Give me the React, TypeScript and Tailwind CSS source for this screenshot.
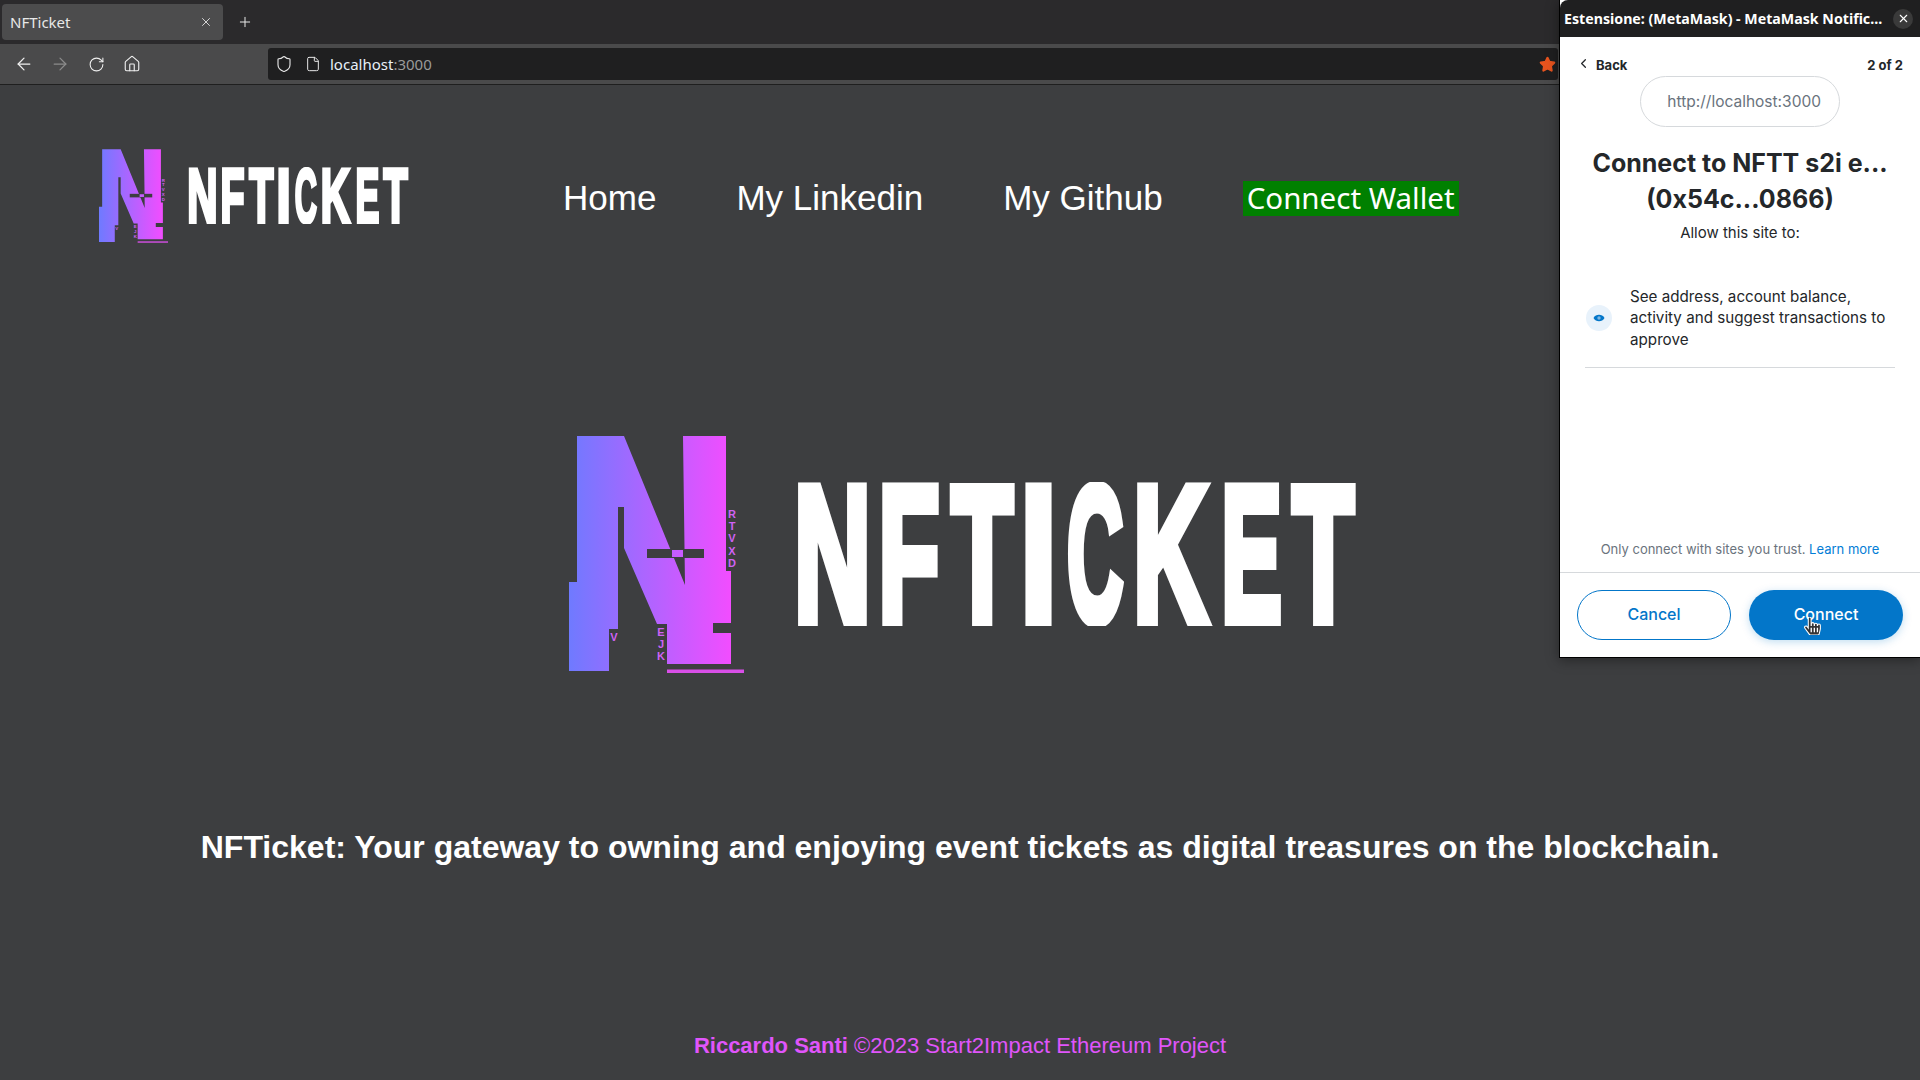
import { ArrowLeft, ArrowRight, RotateCw, Home, Shield, File, Star, X, Plus, ChevronLeft } from "lucide-react";
import { FaHandPointer } from "react-icons/fa";

function Mark({ id, className }: { id: string; className: string }) {
  return (
    <svg viewBox="0 0 175 237" className={className}>
      <defs>
        <linearGradient id={id} gradientUnits="userSpaceOnUse" x1="0" y1="0" x2="162" y2="0">
          <stop offset="0" stopColor="#6f7aff" />
          <stop offset="1" stopColor="#f24dff" />
        </linearGradient>
      </defs>
      <polygon
        fill={`url(#${id})`}
        points="7,0 55,0 116,149 114,0 157,0 157,135 162,135 162,187 144,187 144,197 162,197 162,228 98,228 98,188 88,188 55,112 55,71 49,71 49,193 40,193 40,235 0,235 0,146 8,146 8,0"
      />
      <rect x="78" y="113" width="57" height="9" fill="#3d3e40" />
      <rect x="103" y="114" width="11" height="7" fill={`url(#${id})`} />
      <rect x="98" y="233.5" width="77" height="3.5" fill="#d94fe8" />
      <g fill="#cf62f5" fontFamily="'Liberation Sans', sans-serif" fontWeight="700" fontSize="11" textAnchor="middle">
        <text x="163" y="82">R</text>
        <text x="163" y="94">T</text>
        <text x="163" y="106">V</text>
        <text x="163" y="119">X</text>
        <text x="163" y="131">D</text>
        <text x="92" y="200">E</text>
        <text x="92" y="212">J</text>
        <text x="92" y="224">K</text>
        <text x="45" y="205">V</text>
      </g>
    </svg>
  );
}

const STROKE = 11;
const GLYPHS = [
  { c: "N", left: 0, right: 73, lsb: 0.097, ink: 0.806 },
  { c: "F", left: 84, right: 145, lsb: 0.115, ink: 0.82 },
  { c: "T", left: 152, right: 220, lsb: 0.033, ink: 0.93 },
  { c: "I", left: 228, right: 257, lsb: 0.25, ink: 0.5 },
  { c: "C", left: 269, right: 329, lsb: 0.062, ink: 0.87 },
  { c: "K", left: 339, right: 417, lsb: 0.097, ink: 0.9 },
  { c: "E", left: 426, right: 487, lsb: 0.105, ink: 0.825 },
  { c: "T", left: 493, right: 561, lsb: 0.033, ink: 0.93 },
];

function Wordmark({ className }: { className: string }) {
  const fs = (144 - STROKE) / 0.688;
  return (
    <svg viewBox="0 0 561 144" className={className}>
      <text
        y={144 - STROKE / 2}
        fontFamily="'Liberation Sans', sans-serif"
        fontWeight="700"
        fontSize={fs}
        fill="#ffffff"
        stroke="#ffffff"
        strokeWidth={STROKE}
        strokeLinejoin="miter"
      >
        {GLYPHS.map((g, i) => {
          const adv = (g.right - g.left - STROKE) / g.ink;
          return (
            <tspan key={i} x={g.left + STROKE / 2 - g.lsb * adv} textLength={adv} lengthAdjust="spacingAndGlyphs">
              {g.c}
            </tspan>
          );
        })}
      </text>
    </svg>
  );
}

export default function App() {
  return (
    <div className="relative h-[1080px] w-[1920px] overflow-hidden bg-[#3d3e40] font-['Liberation_Sans',sans-serif]">
      {/* Tab strip */}
      <div className="flex h-[44px] items-start bg-[#2b2a2c] pl-[2px] pt-[4px] font-['Noto_Sans',sans-serif] text-[#e8e8e8]">
        <div className="flex h-[36px] w-[221px] items-center justify-between rounded-[4px] bg-[#4c4c4d] pl-[8px] pr-[10px] text-[15px]">
          <span>NFTicket</span>
          <X size={14} strokeWidth={1.5} />
        </div>
        <div className="ml-[14px] flex h-[36px] items-center">
          <Plus size={16} strokeWidth={1.5} />
        </div>
      </div>
      {/* Toolbar */}
      <div className="flex h-[41px] items-center border-b border-[#1f1f1f] bg-[#4a4a4b] pl-[14px] font-['Noto_Sans',sans-serif]">
        <ArrowLeft size={20} strokeWidth={1.5} className="text-[#f0f0f0]" />
        <ArrowRight size={20} strokeWidth={1.5} className="ml-[16px] text-[#8c8c8c]" />
        <RotateCw size={17} strokeWidth={1.5} className="ml-[18px] text-[#f0f0f0]" />
        <Home size={18} strokeWidth={1.5} className="ml-[18px] text-[#f0f0f0]" />
        <div className="ml-[127px] flex h-[32px] w-[1290px] items-center rounded-[3px] bg-[#1f1f20] pl-[7px]">
          <Shield size={18} strokeWidth={1.5} className="text-[#e8e8e8]" />
          <File size={16} strokeWidth={1.5} className="ml-[12px] text-[#e8e8e8]" />
          <span className="ml-[9px] text-[15px] text-[#e8f0f8]">
            localhost<span className="text-[#9a9a9a]">:3000</span>
          </span>
          <Star size={17} className="ml-auto mr-[2px] fill-[#e8541f] text-[#e8541f]" />
        </div>
      </div>
      {/* Page */}
      <div className="flex h-[995px] flex-col">
        <nav className="flex h-[200px] items-center pl-[99px] pt-[22px]">
          <div className="flex items-end">
            <Mark id="markSmall" className="h-[94px] w-[69px]" />
            <Wordmark className="mb-[19px] ml-[20px] h-[57px] w-[221px]" />
          </div>
          <div className="ml-[154px] mt-[4px] flex items-center gap-[80px] text-[35px] text-white">
            <span>Home</span>
            <span>My Linkedin</span>
            <span>My Github</span>
            <span className="bg-[#008000] px-[4px] pb-[2px] font-['Noto_Sans',sans-serif] text-[29.5px] leading-[33px]">Connect Wallet</span>
          </div>
        </nav>
        <div className="ml-[569px] mt-[151px] flex items-center">
          <Mark id="markLarge" className="h-[237px] w-[175px]" />
          <Wordmark className="mb-[2px] ml-[52px] h-[144px] w-[561px]" />
        </div>
        <p className="mt-[154px] text-center text-[32px] font-bold leading-[40px] text-white">
          NFTicket: Your gateway to owning and enjoying event tickets as digital treasures on the blockchain.
        </p>
        <p className="mt-[162px] text-center text-[22px] text-[#e055fb]">
          <b>Riccardo Santi</b> ©2023 Start2Impact Ethereum Project
        </p>
      </div>
      {/* MetaMask popup window */}
      <div className="absolute right-0 top-0 flex h-[658px] w-[361px] flex-col border-b border-l border-black bg-white font-['Inter',sans-serif] shadow-[0_2px_12px_rgba(0,0,0,0.4)]">
        <div className="flex h-[37px] items-center justify-between rounded-tl-[8px] bg-[#1f1f20] pl-[4px] pr-[7px] font-['Noto_Sans',sans-serif] text-[14.2px] font-bold text-white">
          <span>Estensione: (MetaMask) - MetaMask Notific...</span>
          <span className="flex h-[20px] w-[20px] items-center justify-center rounded-full bg-[#3a3a3a]">
            <X size={13} />
          </span>
        </div>
        <div className="flex items-center justify-between px-[17px] pt-[19px] text-[13px] font-bold text-[#24272a]">
          <span className="flex items-center gap-[5px]">
            <ChevronLeft size={15} className="mt-[-4px] ml-[-1px]" />
            Back
          </span>
          <span>2 of 2</span>
        </div>
        <div className="mx-auto mt-0 flex h-[51px] w-[200px] items-center justify-end rounded-full border border-[#d6d9dc] pr-[18px] pt-[2px] text-[15.5px] text-[#6a737d]">
          http://localhost:3000
        </div>
        <h1 className="mt-[18px] text-center text-[25px] font-bold leading-[36px] text-[#24272a]">
          Connect to NFTT s2i e...
          <br />
          (0x54c...0866)
        </h1>
        <p className="mt-[6px] text-center text-[15px] leading-[20px] text-[#24272a]">Allow this site to:</p>
        <div className="mx-[25px] mt-[43px] flex items-center border-b border-[#d6d9dc] pb-[17px]">
          <span className="ml-[1px] flex h-[26px] w-[26px] shrink-0 items-center justify-center rounded-full bg-[#e8f2fb]">
            <svg viewBox="0 0 12 12" className="h-[12px] w-[12px]">
              <path d="M0.5 6C2.8 1.6 9.2 1.6 11.5 6C9.2 10.4 2.8 10.4 0.5 6Z" fill="#0376c9" />
              <circle cx="6" cy="6" r="1.7" fill="#7fb6e2" />
            </svg>
          </span>
          <span className="ml-[18px] text-[15.2px] leading-[21.5px] text-[#24272a]">
            See address, account balance, activity and suggest transactions to approve
          </span>
        </div>
        <p className="mt-[172px] text-center text-[13px] leading-[18px] text-[#6a737d]">
          Only connect with sites you trust. <span className="text-[#037dd6]">Learn more</span>
        </p>
        <div className="relative mt-[14px] flex justify-between border-t border-[#d6d9dc] px-[17px] pt-[17px] text-[16px] font-medium">
          <button className="h-[50px] w-[154px] rounded-full border border-[#0376c9] pb-[2px] text-[#0376c9]">Cancel</button>
          <button className="h-[50px] w-[154px] rounded-full bg-[#0376c9] pb-[2px] text-white shadow-[0_2px_8px_rgba(3,118,201,0.25)]">Connect</button>
          <FaHandPointer className="absolute left-[244px] top-[44px] h-[18px] w-[17px] text-[#333333]" stroke="#ffffff" strokeWidth={30} />
        </div>
      </div>
    </div>
  );
}
